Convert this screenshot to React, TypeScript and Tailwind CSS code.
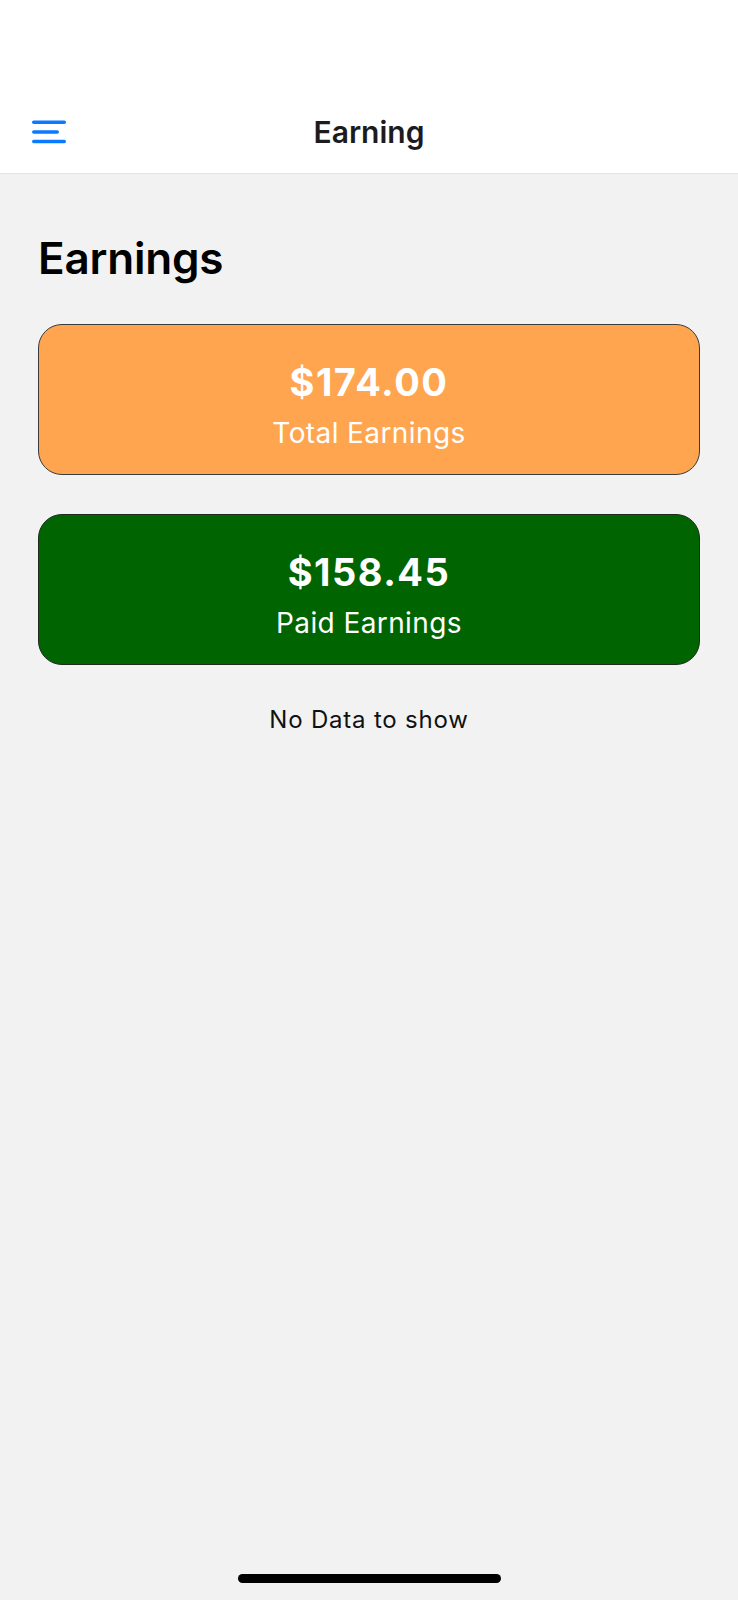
export default function App() {
  return (
    <div className="w-full min-h-[1600px] bg-[#f2f2f2] flex flex-col font-['Inter',sans-serif] text-black">
      <header className="h-[174px] bg-white border-b border-[#e4e4e4] pt-[90px]">
        <div className="h-[83px] grid grid-cols-[1fr_auto_1fr] items-center">
          <button className="pl-[32px] justify-self-start" aria-label="Menu">
            <svg width="34" height="24" viewBox="0 0 34 24" fill="none">
              <line x1="1.75" y1="2.2" x2="32.25" y2="2.2" stroke="#0a7aff" strokeWidth="3.5" strokeLinecap="round" />
              <line x1="1.75" y1="11.9" x2="25.25" y2="11.9" stroke="#0a7aff" strokeWidth="3.5" strokeLinecap="round" />
              <line x1="1.75" y1="21.5" x2="32.25" y2="21.5" stroke="#0a7aff" strokeWidth="3.5" strokeLinecap="round" />
            </svg>
          </button>
          <h1 className="text-[30px] leading-[36px] font-semibold text-[#1c1c1e]">Earning</h1>
          <div />
        </div>
      </header>

      <main className="flex-1 px-[38px] pt-[58px] flex flex-col">
        <h2 className="text-[44px] leading-[53px] font-semibold tracking-[-0.2px]">Earnings</h2>

        <div className="mt-[39px] h-[151px] rounded-[24px] bg-[#ffa54f] border border-[#3b3b3b] flex flex-col items-center pt-[34px] text-white">
          <p className="text-[38px] leading-[46px] font-bold tracking-[1.5px]">$174.00</p>
          <p className="mt-[11px] text-[28px] leading-[34px] tracking-[0.4px]">Total Earnings</p>
        </div>

        <div className="mt-[39px] h-[151px] rounded-[24px] bg-[#006400] border border-[#1f2b1f] flex flex-col items-center pt-[34px] text-white">
          <p className="text-[38px] leading-[46px] font-bold tracking-[1.5px]">$158.45</p>
          <p className="mt-[11px] text-[28px] leading-[34px] tracking-[0.4px]">Paid Earnings</p>
        </div>

        <p className="mt-[41px] text-center text-[24px] leading-[28px] tracking-[0.8px] text-[#111]">No Data to show</p>
      </main>

      <div className="pb-[17px] flex justify-center">
        <div className="w-[263px] h-[9px] rounded-full bg-black" />
      </div>
    </div>
  );
}
